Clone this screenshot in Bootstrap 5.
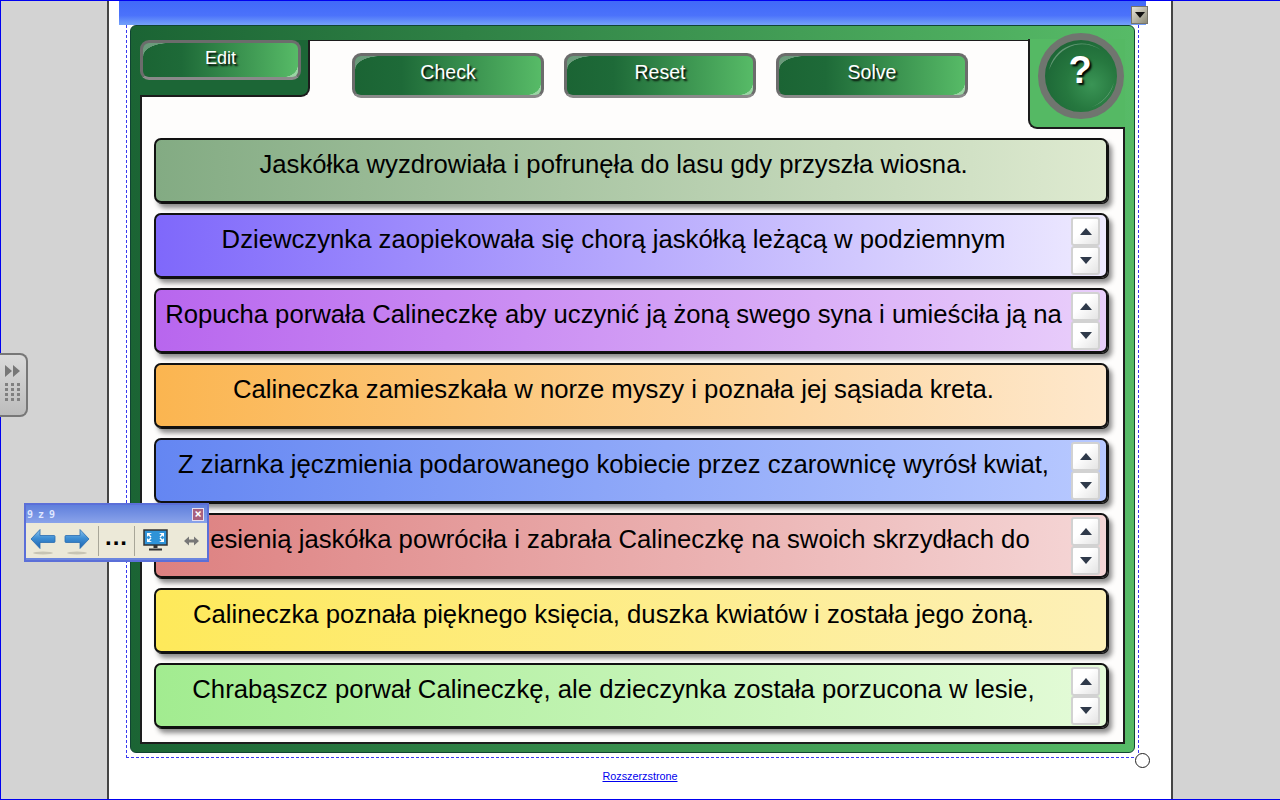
<!doctype html>
<html lang="pl">
<head>
<meta charset="utf-8">
<title>Calineczka</title>
<link href="https://cdn.jsdelivr.net/npm/bootstrap@5.3.2/dist/css/bootstrap.min.css" rel="stylesheet">
<style>
  html, body { height: 100%; overflow: hidden; }
  body { background: #d3d3d3; border: 1px solid #0000f0; border-right: 0; font-family: "Liberation Sans", Arial, sans-serif; color: #000; }
  .sheet-page { width: 1066px; height: 798px; margin-left: 106px; background: #fff; border-left: 2px solid #444; border-right: 2px solid #444; padding-left: 10px; position: relative; }
  .top-bar { width: 1027px; height: 24px; background: linear-gradient(#4169f8 0, #4b72fb 60%, #74a2f8 100%); position: relative; }
  .bar-drop { position: absolute; right: -2px; top: 5px; width: 17px; height: 18px; background: linear-gradient(135deg, #e8e6d8, #8c8a78); border: 1px solid #77756a; display: flex; align-items: center; justify-content: center; }
  .bar-drop i { border: 5px solid transparent; border-top: 6px solid #111; border-bottom: 0; }
  .select-box { width: 1013px; height: 733px; margin-left: 7px; border-left: 1px dashed #3a3af0; border-right: 1px dashed #3a3af0; border-bottom: 1px dashed #3a3af0; padding: 0 3px 3px 3px; position: relative; }
  .select-knob { position: absolute; right: -12px; bottom: -11px; width: 15px; height: 15px; border: 1px solid #222; border-radius: 50%; background: #fff; }
  .green-panel { height: 728px; border-radius: 6px; border: 1px solid #143; background: linear-gradient(90deg, #1b6434, #57bb67); padding: 14px 9px 9px 9px; }
  .white-sheet { height: 704px; background: #fefdfc; border: 2px solid #1c1c1c; border-top-width: 1px; }
  .head-row { display: flex; height: 88px; margin: -1px -2px 0 -2px; }
  .edit-tab { width: 170px; height: 57px; background: #1c6636; border-right: 2px solid #1c1c1c; border-bottom: 2px solid #1c1c1c; border-radius: 0 0 9px 0; flex: none; }
  .help-tab { width: 97px; height: 90px; background: #55b964; border-left: 2px solid #1c1c1c; border-bottom: 2px solid #1c1c1c; border-radius: 0 0 0 9px; flex: none; margin-left: auto; margin-top: -1px; position: relative; }
  .action-row { display: flex; gap: 20px; padding: 13px 0 0 42px; }
  .glass-btn { position: relative; display: flex; align-items: center; justify-content: center; width: 192px; height: 45px; padding: 0 0 5px; border: 3px solid #6c6c6c; border-bottom-color: #8a8a8a; border-radius: 9px; background: linear-gradient(90deg, #1b6434 0, #1e6a38 25%, #57bb67 100%); color: #fff; font-size: 19.5px; text-shadow: 2px 2px 2px #000; overflow: hidden; }
  .glass-btn::before { content: ""; position: absolute; left: 0; top: 0; width: 26px; height: 13px; background: radial-gradient(ellipse 26px 13px at 100% 100%, transparent 97%, rgba(255,255,255,.35) 100%); }
  .glass-btn::after { content: ""; position: absolute; right: 0; bottom: 0; width: 14px; height: 12px; background: radial-gradient(ellipse 14px 12px at 0 0, transparent 97%, rgba(255,255,255,.4) 100%); }
  .glass-btn.tab-btn { width: 161px; height: 40px; font-size: 18px; padding-bottom: 4px; }
  .help-btn { position: absolute; left: 8px; top: -6px; width: 86px; height: 86px; display: flex; align-items: center; justify-content: center; padding: 0; border: 7px solid #70756f; border-radius: 50%; background: radial-gradient(circle at 65% 62%, #3a9455 0, #26783f 40%, #175c31 100%); color: #fff; font-size: 38px; font-weight: 700; line-height: 1; text-shadow: 2px 2px 2px #000; overflow: hidden; }
  .help-btn span { margin: -13px 2px 0 0; }
  .help-gloss { position: absolute; inset: 0; }
  .strip-list { display: flex; flex-direction: column; gap: 10px; padding: 10px 15px 0 12px; }
  .strip { display: flex; height: 65px; border: 2px solid #111; border-radius: 7px; box-shadow: 1px 1px 0 #111, 4px 5px 5px rgba(0,0,0,.45); padding-right: 6px; }
  .strip-text { flex: 1; min-width: 0; height: 48px; font-size: 25.7px; line-height: 48px; text-align: center; white-space: nowrap; overflow: hidden; }
  .strip-spin { width: 29px; flex: none; padding-top: 2px; }
  .spin-btn { display: flex; align-items: center; justify-content: center; width: 29px; height: 29px; padding: 0; background: linear-gradient(135deg, #fff 40%, #e4e4e4); border: 2px solid #d2d2d2; border-radius: 3px; }
  .spin-btn i { border: 6px solid transparent; }
  .spin-up i { border-bottom: 7px solid #2f3a4a; border-top: 0; }
  .spin-down i { border-top: 7px solid #2f3a4a; border-bottom: 0; }
  .s1 { background: linear-gradient(90deg, #83ab83, #deead0); }
  .s2 { background: linear-gradient(90deg, #7f68fb, #eeeaff); }
  .s3 { background: linear-gradient(90deg, #b866ee, #e9cffb); }
  .s4 { background: linear-gradient(90deg, #fbb550, #fee8cc); }
  .s5 { background: linear-gradient(90deg, #6486f2, #b8c9ff); }
  .s6 { background: linear-gradient(90deg, #dd8080, #f5d6d6); }
  .s7 { background: linear-gradient(90deg, #fee95a, #fdf0b8); }
  .s8 { background: linear-gradient(90deg, #a2ec90, #e4fbd8); }
  .page-link-row { text-align: center; font-size: 10.8px; margin-top: 10px; padding-right: 10px; }
  .page-link-row a { color: #00e; }
  .side-tab { position: absolute; left: -1px; top: 353px; width: 29px; height: 64px; background: linear-gradient(#dadada, #bcbcbc); border: 2px solid #777; border-left: 0; border-radius: 0 8px 8px 0; display: flex; flex-direction: column; align-items: center; gap: 6px; padding-top: 10px; }
  .float-bar { position: absolute; left: 24px; top: 503px; width: 185px; height: 59px; background: #6b86de; border: 2px solid #5b6fd8; }
  .float-title { display: flex; justify-content: space-between; align-items: center; height: 18px; padding: 0 3px 0 1px; background: linear-gradient(#5f7fdc, #8aa3ea); color: #dfe6ff; font-family: "DejaVu Sans Mono", monospace; font-size: 10px; font-weight: 700; letter-spacing: -.5px; }
  .float-close { width: 12px; height: 13px; padding: 0; border: 1px solid #e8dff0; background: #a8607e; color: #fff; font-size: 12px; line-height: 9px; font-weight: 700; }
  .float-tools { display: flex; align-items: center; height: 35px; background: #ece9d8; padding-left: 4px; }
  .tool-sep { width: 1px; height: 30px; background: #a8a698; }
  .tool-dots { width: 35px; text-align: center; font-weight: 700; font-size: 24px; line-height: 20px; letter-spacing: 1px; padding-bottom: 8px; }
</style>
</head>
<body>
<div class="sheet-page">
  <div class="top-bar"><span class="bar-drop"><i></i></span></div>
  <div class="select-box">
    <div class="green-panel">
      <div class="white-sheet">
        <div class="head-row">
          <div class="edit-tab"><button type="button" class="glass-btn tab-btn">Edit</button></div>
          <div class="action-row">
            <button type="button" class="glass-btn">Check</button>
            <button type="button" class="glass-btn">Reset</button>
            <button type="button" class="glass-btn">Solve</button>
          </div>
          <div class="help-tab">
            <button type="button" class="help-btn"><span>?</span>
              <svg class="help-gloss" viewBox="0 0 72 72"><path d="M4 30A33 33 0 0 1 56 10 36 36 0 0 0 30 5Q12 10 4 30Z" fill="#fff" fill-opacity=".3"/><path d="M69 42A34 34 0 0 1 44 68 38 38 0 0 0 69 42Z" fill="#fff" fill-opacity=".3"/></svg>
            </button>
          </div>
        </div>
        <div class="strip-list">
          <div class="strip s1"><div class="strip-text">Jaskółka wyzdrowiała i pofrunęła do lasu gdy przyszła wiosna.</div><div class="strip-spin"></div></div>
          <div class="strip s2"><div class="strip-text">Dziewczynka zaopiekowała się chorą jaskółką leżącą w podziemnym</div><div class="strip-spin"><button type="button" class="spin-btn spin-up"><i></i></button><button type="button" class="spin-btn spin-down"><i></i></button></div></div>
          <div class="strip s3"><div class="strip-text">Ropucha porwała Calineczkę aby uczynić ją żoną swego syna i umieściła ją na</div><div class="strip-spin"><button type="button" class="spin-btn spin-up"><i></i></button><button type="button" class="spin-btn spin-down"><i></i></button></div></div>
          <div class="strip s4"><div class="strip-text">Calineczka zamieszkała w norze myszy i poznała jej sąsiada kreta.</div><div class="strip-spin"></div></div>
          <div class="strip s5"><div class="strip-text">Z ziarnka jęczmienia podarowanego kobiecie przez czarownicę wyrósł kwiat,</div><div class="strip-spin"><button type="button" class="spin-btn spin-up"><i></i></button><button type="button" class="spin-btn spin-down"><i></i></button></div></div>
          <div class="strip s6"><div class="strip-text">Jesienią jaskółka powróciła i zabrała Calineczkę na swoich skrzydłach do</div><div class="strip-spin"><button type="button" class="spin-btn spin-up"><i></i></button><button type="button" class="spin-btn spin-down"><i></i></button></div></div>
          <div class="strip s7"><div class="strip-text">Calineczka poznała pięknego księcia, duszka kwiatów i została jego żoną.</div><div class="strip-spin"></div></div>
          <div class="strip s8"><div class="strip-text">Chrabąszcz porwał Calineczkę, ale dzieczynka została porzucona w lesie,</div><div class="strip-spin"><button type="button" class="spin-btn spin-up"><i></i></button><button type="button" class="spin-btn spin-down"><i></i></button></div></div>
        </div>
      </div>
    </div>
    <span class="select-knob"></span>
  </div>
  <div class="page-link-row"><a href="#">Rozszerzstrone</a></div>
</div>

<!-- boczna zakladka -->
<div class="side-tab">
  <svg width="17" height="12" viewBox="0 0 17 12"><path d="M1 0l7 6-7 6zM9 0l7 6-7 6z" fill="#777"/></svg>
  <svg width="15" height="19" viewBox="0 0 15 19" fill="#808080"><path d="M0 0h3v3H0zM6 0h3v3H6zM12 0h3v3h-3zM0 5h3v3H0zM6 5h3v3H6zM12 5h3v3h-3zM0 10h3v3H0zM6 10h3v3H6zM12 10h3v3h-3zM0 15h3v3H0zM6 15h3v3H6zM12 15h3v3h-3z"/></svg>
</div>

<!-- plywajacy pasek -->
<div class="float-bar">
  <div class="float-title"><span>9 z 9</span><button type="button" class="float-close">×</button></div>
  <div class="float-tools">
    <svg width="0" height="0" class="position-absolute"><defs><linearGradient id="arrowFill" x1="0" y1="0" x2="0" y2="1"><stop offset="0" stop-color="#8cc6ee"/><stop offset=".45" stop-color="#3f8fd4"/><stop offset="1" stop-color="#1f66b0"/></linearGradient></defs></svg>
    <svg class="tool-arrow" width="26" height="30" viewBox="0 0 26 30"><ellipse cx="13" cy="27" rx="10" ry="1.500" fill="#c8c5b4"/><path d="M1 13 10 3.500v6h14q1 0 1 1v5q0 1-1 1H10v6z" fill="url(#arrowFill)" stroke="#2a6cb0" stroke-width=".8"/></svg>
    <span class="ms-2"></span>
    <svg class="tool-arrow" width="26" height="30" viewBox="0 0 26 30"><ellipse cx="13" cy="27" rx="10" ry="1.500" fill="#c8c5b4"/><path d="M25 13 16 3.500v6H2q-1 0-1 1v5q0 1 1 1h14v6z" fill="url(#arrowFill)" stroke="#2a6cb0" stroke-width=".8"/></svg>
    <span class="ms-2"></span>
    <span class="tool-sep"></span>
    <span class="tool-dots">...</span>
    <span class="tool-sep"></span>
    <svg class="ms-2" width="25" height="23" viewBox="0 0 25 23"><rect x="1" y="1" width="23" height="15" fill="#2f93d8" stroke="#333" stroke-width="1.500"/><path d="M9 4 4 4 4 8 5.500 6.500 7.500 8.500 8.500 7.500 6.500 5.500ZM16 4 21 4 21 8 19.500 6.500 17.500 8.500 16.500 7.500 18.500 5.500ZM9 13 4 13 4 9 5.500 10.500 7.500 8.500 8.500 9.500 6.500 11.500ZM16 13 21 13 21 9 19.500 10.500 17.500 8.500 16.500 9.500 18.500 11.500Z" fill="#fff"/><path d="M10.500 16h4v3h-4zM6 19.500h13v2H6z" fill="#333"/></svg>
    <svg class="ms-3" width="15" height="10" viewBox="0 0 15 10"><path d="M0 5l5-4.500v3h5V.5L15 5l-5 4.500v-3H5v3z" fill="#777"/></svg>
  </div>
</div>

<script src="https://cdn.jsdelivr.net/npm/bootstrap@5.3.2/dist/js/bootstrap.bundle.min.js"></script>
</body>
</html>
